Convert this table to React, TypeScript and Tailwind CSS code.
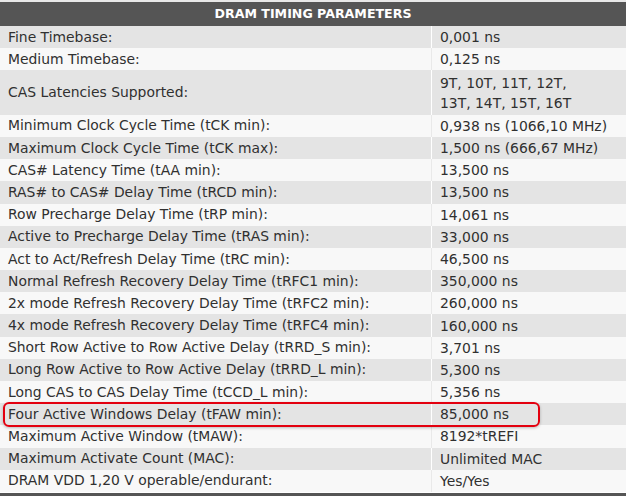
const rows: { label: string; value: string[]; mark?: boolean }[] = [
  { label: "Fine Timebase:", value: ["0,001 ns"] },
  { label: "Medium Timebase:", value: ["0,125 ns"] },
  { label: "CAS Latencies Supported:", value: ["9T, 10T, 11T, 12T,", "13T, 14T, 15T, 16T"] },
  { label: "Minimum Clock Cycle Time (tCK min):", value: ["0,938 ns (1066,10 MHz)"] },
  { label: "Maximum Clock Cycle Time (tCK max):", value: ["1,500 ns (666,67 MHz)"] },
  { label: "CAS# Latency Time (tAA min):", value: ["13,500 ns"] },
  { label: "RAS# to CAS# Delay Time (tRCD min):", value: ["13,500 ns"] },
  { label: "Row Precharge Delay Time (tRP min):", value: ["14,061 ns"] },
  { label: "Active to Precharge Delay Time (tRAS min):", value: ["33,000 ns"] },
  { label: "Act to Act/Refresh Delay Time (tRC min):", value: ["46,500 ns"] },
  { label: "Normal Refresh Recovery Delay Time (tRFC1 min):", value: ["350,000 ns"] },
  { label: "2x mode Refresh Recovery Delay Time (tRFC2 min):", value: ["260,000 ns"] },
  { label: "4x mode Refresh Recovery Delay Time (tRFC4 min):", value: ["160,000 ns"] },
  { label: "Short Row Active to Row Active Delay (tRRD_S min):", value: ["3,701 ns"] },
  { label: "Long Row Active to Row Active Delay (tRRD_L min):", value: ["5,300 ns"] },
  { label: "Long CAS to CAS Delay Time (tCCD_L min):", value: ["5,356 ns"] },
  { label: "Four Active Windows Delay (tFAW min):", value: ["85,000 ns"], mark: true },
  { label: "Maximum Active Window (tMAW):", value: ["8192*tREFI"] },
  { label: "Maximum Activate Count (MAC):", value: ["Unlimited MAC"] },
  { label: "DRAM VDD 1,20 V operable/endurant:", value: ["Yes/Yes"] },
];

export default function App() {
  return (
    <div className="w-[626px] h-[496px] bg-white font-['DejaVu_Sans',sans-serif] text-[13.9px] text-[#303030] overflow-hidden">
      {/* header bar */}
      <div className="border-t-2 border-[#e8e8e8] bg-[#555555] h-[26px] flex items-center justify-center text-white font-bold text-[12.6px]">
        DRAM TIMING PARAMETERS
      </div>

      <div className="flex flex-col">
        {rows.map((r, i) => {
          const gray = i % 2 === 0;
          return (
            <div
              key={r.label}
              className={`relative flex ${r.value.length > 1 ? "h-[44.4px]" : "h-[22.2px]"} ${gray ? "bg-[#e4e4e4]" : "bg-[#f8f8f8]"}`}
            >
              <div className="w-[431px] pl-[8px] flex items-center whitespace-nowrap">{r.label}</div>
              <div
                className={`flex-1 pl-[8px] flex flex-col justify-center leading-[20px] border-l ${gray ? "border-white" : "border-[#e9e9e9]"}`}
              >
                {r.value.map((v) => (
                  <span key={v} className="whitespace-nowrap">{v}</span>
                ))}
              </div>
              {r.mark && (
                <div className="absolute z-10 left-[3px] top-[-1px] w-[537px] h-[25px] rounded-[6px] border-2 border-[#e3000f] shadow-[0_1px_3px_rgba(0,0,0,0.25)]" />
              )}
            </div>
          );
        })}
      </div>
      <div className="mt-[1px] h-[3px] bg-[#555555]" />
    </div>
  );
}
